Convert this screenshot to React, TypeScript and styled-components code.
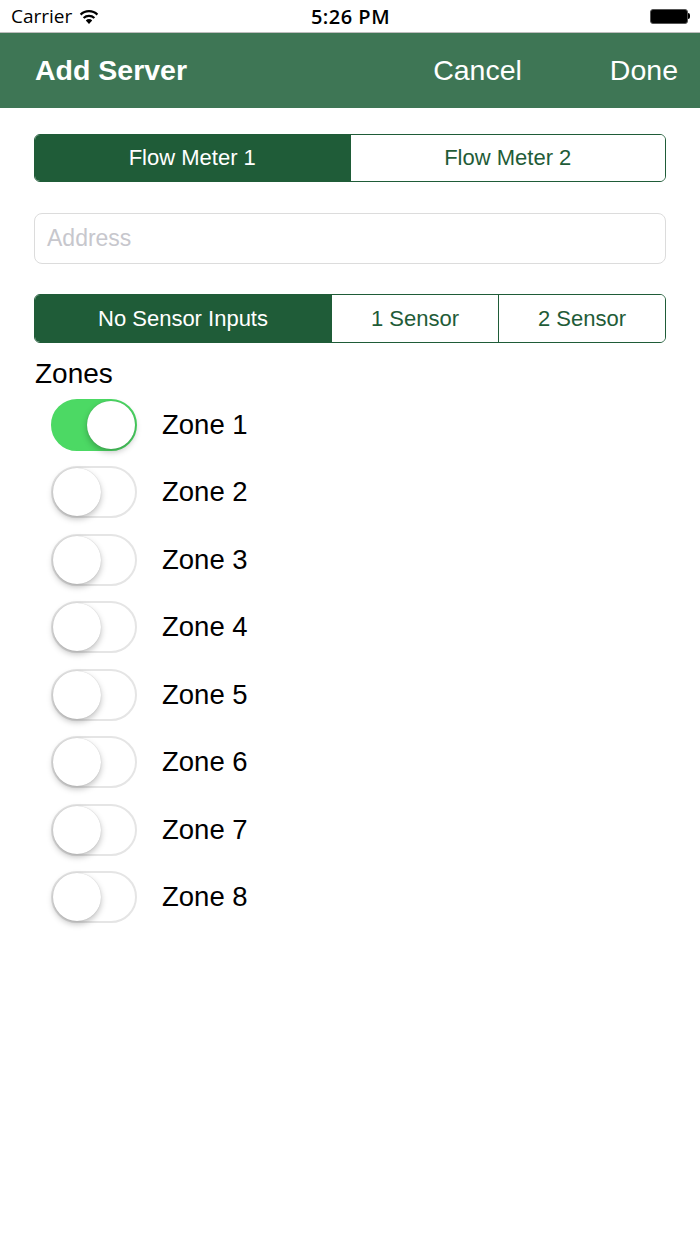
import React, { useState } from "react";
import styled, { createGlobalStyle } from "styled-components";

const GlobalStyle = createGlobalStyle`
  html, body {
    margin: 0;
    padding: 0;
    background: #FFFFFF;
    font-family: "Liberation Sans", Roboto, Arial, sans-serif;
  }
`;

const GREEN_BAR = "#3E7655";
const GREEN_DARK = "#1F5C38";

const Screen = styled.div`
  width: 700px;
  height: 1244px;
  background: #FFFFFF;
  display: flex;
  flex-direction: column;
`;

const StatusBar = styled.div`
  height: 33px;
  display: grid;
  grid-template-columns: 1fr auto 1fr;
  align-items: center;
  padding: 0 10px 0 11px;
  color: #000;
  border-bottom: 1px solid #BDBDBD;
  box-sizing: border-box;
`;

const Carrier = styled.div`
  display: flex;
  align-items: center;
  gap: 7px;
  font-family: "Open Sans", "Liberation Sans", sans-serif;
  font-size: 19px;
`;

const Clock = styled.div`
  font-weight: 600;
  font-family: "Open Sans", "Liberation Sans", sans-serif;
  font-size: 20px;
  letter-spacing: 0.5px;
`;

const Battery = styled.div`
  justify-self: end;
  display: flex;
  align-items: center;
`;

const BatteryBody = styled.div`
  width: 36px;
  height: 13px;
  background: #000;
  border: 1.5px solid #555;
  border-radius: 3px;
`;

const BatteryTip = styled.div`
  width: 2px;
  height: 6px;
  background: #000;
  border-radius: 0 2px 2px 0;
`;

const NavBar = styled.div`
  height: 75px;
  background: ${GREEN_BAR};
  display: flex;
  align-items: center;
  padding: 0 22px 0 35px;
  color: #FFFFFF;
`;

const NavTitle = styled.div`
  font-size: 28.5px;
  font-weight: bold;
  flex: 1;
`;

const NavButton = styled.div<{ gap: number }>`
  font-size: 28.5px;
  margin-left: ${p => p.gap}px;
`;

const Content = styled.div`
  padding: 26px 34px 0 34px;
  display: flex;
  flex-direction: column;
`;

const Segmented = styled.div`
  display: flex;
  height: 48px;
  border: 1.5px solid ${GREEN_DARK};
  border-radius: 6px;
  overflow: hidden;
  box-sizing: border-box;
`;

const Segment = styled.div<{ selected: boolean; width?: number }>`
  ${p => (p.width ? `width: ${p.width}px;` : "flex: 1;")}
  display: flex;
  align-items: center;
  justify-content: center;
  font-size: 22px;
  background: ${p => (p.selected ? GREEN_DARK : "#FFFFFF")};
  color: ${p => (p.selected ? "#FFFFFF" : GREEN_DARK)};
  & + & {
    border-left: 1.5px solid ${GREEN_DARK};
  }
`;

const AddressField = styled.div`
  margin-top: 31px;
  height: 51px;
  border: 1px solid #DCDCDC;
  border-radius: 8px;
  display: flex;
  align-items: center;
  padding-left: 12px;
  font-size: 23px;
  color: #C7C7CD;
  box-sizing: border-box;
`;

const SensorGroup = styled(Segmented)`
  margin-top: 30px;
  height: 49px;
`;

const SectionLabel = styled.div`
  margin-top: 14px;
  font-size: 28px;
  color: #000;
  height: 33px;
  display: flex;
  align-items: center;
  padding-left: 1px;
`;

const ZoneList = styled.div`
  display: flex;
  flex-direction: column;
  margin-top: 1px;
`;

const ZoneRow = styled.div`
  height: 67.5px;
  display: flex;
  align-items: center;
  padding-left: 17px;
`;

const Switch = styled.div<{ on: boolean }>`
  position: relative;
  width: 86px;
  height: 52px;
  border-radius: 26px;
  box-sizing: border-box;
  background: ${p => (p.on ? "#4CD964" : "#FFFFFF")};
  border: 2px solid ${p => (p.on ? "#4CD964" : "#E5E5E5")};
  cursor: pointer;
`;

const Knob = styled.div<{ on: boolean }>`
  position: absolute;
  top: 0;
  left: ${p => (p.on ? "34px" : "0")};
  width: 48px;
  height: 48px;
  border-radius: 50%;
  background: #FFFFFF;
  box-shadow: 0 3px 6px rgba(0, 0, 0, 0.25), 0 0 1px rgba(0, 0, 0, 0.2);
`;

const ZoneName = styled.div`
  margin-left: 25px;
  font-size: 27.5px;
  color: #000;
`;

const WifiIcon = () => (
  <svg width="20" height="15" viewBox="0 0 20 15">
    <path d="M10 15 L6.8 11.4 A4.6 4.6 0 0 1 13.2 11.4 Z" fill="#000" />
    <path d="M4.6 9 A7.8 7.8 0 0 1 15.4 9" stroke="#000" strokeWidth="2.2" fill="none" />
    <path d="M1.6 5.6 A12 12 0 0 1 18.4 5.6" stroke="#000" strokeWidth="2.2" fill="none" />
  </svg>
);

const zones = ["Zone 1", "Zone 2", "Zone 3", "Zone 4", "Zone 5", "Zone 6", "Zone 7", "Zone 8"];

const App = () => {
  const [meter, setMeter] = useState(0);
  const [sensor, setSensor] = useState(0);
  const [enabled, setEnabled] = useState<boolean[]>([true, false, false, false, false, false, false, false]);

  const toggle = (i: number) => {
    setEnabled(prev => prev.map((v, idx) => (idx === i ? !v : v)));
  };

  return (
    <Screen>
      <GlobalStyle />
      <StatusBar>
        <Carrier>
          Carrier
          <WifiIcon />
        </Carrier>
        <Clock>5:26 PM</Clock>
        <Battery>
          <BatteryBody />
          <BatteryTip />
        </Battery>
      </StatusBar>
      <NavBar>
        <NavTitle>Add Server</NavTitle>
        <NavButton gap={0}>Cancel</NavButton>
        <NavButton gap={88}>Done</NavButton>
      </NavBar>
      <Content>
        <Segmented>
          {["Flow Meter 1", "Flow Meter 2"].map((label, i) => (
            <Segment key={label} selected={meter === i} onClick={() => setMeter(i)}>
              {label}
            </Segment>
          ))}
        </Segmented>
        <AddressField>Address</AddressField>
        <SensorGroup>
          {["No Sensor Inputs", "1 Sensor", "2 Sensor"].map((label, i) => (
            <Segment
              key={label}
              selected={sensor === i}
              width={i === 0 ? 296 : undefined}
              onClick={() => setSensor(i)}
            >
              {label}
            </Segment>
          ))}
        </SensorGroup>
        <SectionLabel>Zones</SectionLabel>
        <ZoneList>
          {zones.map((z, i) => (
            <ZoneRow key={z}>
              <Switch on={enabled[i]} onClick={() => toggle(i)}>
                <Knob on={enabled[i]} />
              </Switch>
              <ZoneName>{z}</ZoneName>
            </ZoneRow>
          ))}
        </ZoneList>
      </Content>
    </Screen>
  );
};

export default App;
